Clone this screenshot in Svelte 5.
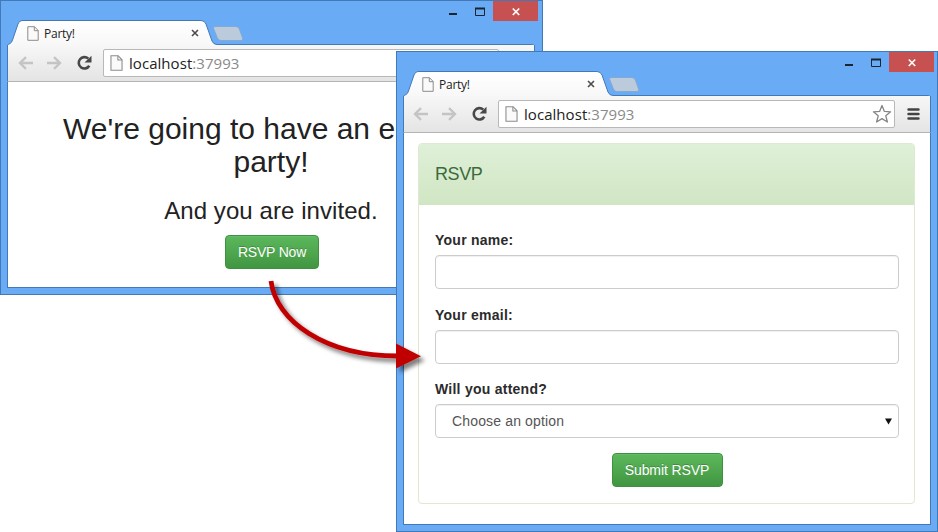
<script>
  const fields = ['Your name:', 'Your email:'];
</script>

{#snippet pageIcon(w, h)}
  <svg width={w} height={h} viewBox="0 0 12 15" fill="none" stroke="#8c8c8c">
    <path d="M.8.7H7.5L11.2 4.5V14.3H.8Z" fill="#fafafa" />
    <path d="M7.3.8V4.7H11.2" />
  </svg>
{/snippet}

{#snippet chrome()}
  <header class="strip">
    <svg class="shape" width="542" height="46" viewBox="0 0 542 46">
      <defs>
        <linearGradient id="tabfill" x1="0" y1="0" x2="0" y2="1">
          <stop offset="0" stop-color="#fff" />
          <stop offset="1" stop-color="#f7f7f7" />
        </linearGradient>
      </defs>
      <path d="M7.5 47V46Q8 44 10 43.5Q11.5 43 12.5 40L18 24Q19.3 20.5 22 20.5H201Q204.5 20.5 206 24L212 41Q213.5 44.5 217 44.5H532Q534.5 44.5 534.5 47Z" fill="url(#tabfill)" stroke="#4479b7" />
      <path d="M215 26.5H236Q238.5 26.5 239.4 29L242.7 38.5Q243.3 40.5 241 40.5H221Q218.3 40.5 217.4 38L213.6 28.5Q213 26.5 215 26.5Z" fill="#bccbdc" stroke="#83a9d4" />
      <path d="M449 14H457" stroke="#1c2430" stroke-width="2" />
      <path d="M475.5 8.5H484.5V15.5H475.5Z" fill="none" stroke="#1c2430" />
      <path d="M475 8.5H485" stroke="#1c2430" stroke-width="2" />
      <path d="M493 1H538V21H493Z" fill="#c75050" />
      <path d="M512.8 8.5L519.2 15M519.2 8.5L512.8 15" stroke="#fff" stroke-width="1.7" />
    </svg>
    <div class="tab">
      {@render pageIcon(12, 15)}
      <span class="title">Party!</span>
      <svg class="x" width="8" height="8" viewBox="0 0 8 8"><path d="M1 1L7 7M7 1L1 7" stroke="#4c4c4c" stroke-width="1.6" /></svg>
    </div>
  </header>
  <nav class="toolbar">
    <svg class="nav" width="80" height="20" viewBox="0 0 80 20" fill="none">
      <path d="M16 10H3M9 4.2L3 10L9 15.8" stroke="#c4c4c4" stroke-width="2.3" />
      <path d="M30 10H43M37 4.2L43 10L37 15.8" stroke="#c4c4c4" stroke-width="2.3" />
      <path d="M71.3 5.6A5.7 5.7 0 1 0 72.3 12.8" stroke="#484848" stroke-width="2.6" />
      <path d="M74.5 2.8V9.4H67.5Z" fill="#484848" />
    </svg>
    <div class="omnibox">
      {@render pageIcon(13, 16)}
      <span class="url">localhost<i>:37993</i></span>
      <svg class="star" width="20" height="20" viewBox="0 0 20 20">
        <path d="M10 1.5L12.4 7.4L18.6 7.8L13.8 11.8L15.4 18L10 14.6L4.6 18L6.2 11.8L1.4 7.8L7.6 7.4Z" fill="#fff" stroke="#858585" stroke-width="1.3" stroke-linejoin="round" />
      </svg>
    </div>
    <svg class="menu" width="14" height="14" viewBox="0 0 14 14">
      <path d="M1.7 2.2H12.3M1.7 7H12.3M1.7 11.8H12.3" stroke="#434343" stroke-width="2.8" stroke-linecap="round" />
    </svg>
  </nav>
{/snippet}

<main class="stage">
  <section class="window back">
    {@render chrome()}
    <div class="page invite">
      <h1>We're going to have an e<br /><span>party!</span></h1>
      <h2>And you are invited.</h2>
      <button class="now">RSVP Now</button>
    </div>
  </section>

  <section class="window front">
    {@render chrome()}
    <div class="page">
      <form class="panel" onsubmit={(e) => e.preventDefault()}>
        <h3>RSVP</h3>
        <div class="body">
          {#each fields as label}
            <label>{label}<input type="text" /></label>
          {/each}
          <label for="attend">Will you attend?</label>
          <div class="select" id="attend">
            <span>Choose an option</span>
            <svg width="7" height="7" viewBox="0 0 7 7"><path d="M0 .5H7L3.5 6.5Z" fill="#111" /></svg>
          </div>
          <button class="submit">Submit RSVP</button>
        </div>
      </form>
    </div>
  </section>

  <svg class="arrow" width="180" height="110" viewBox="0 0 180 110">
    <defs>
      <filter id="shade" x="-10%" y="-10%" width="125%" height="125%">
        <feDropShadow dx="4" dy="4" stdDeviation="2" flood-color="#000" flood-opacity=".5" />
      </filter>
    </defs>
    <g filter="url(#shade)">
      <path d="M11 11C16 51 65 86 138 86" fill="none" stroke="#c00000" stroke-width="4.8" />
      <path d="M136 73.5L161 86.3L136 98.5Z" fill="#c00000" />
    </g>
  </svg>
</main>

<style>
  :global(body) { background: #fff; }
  .stage {
    position: relative;
    width: 938px;
    height: 532px;
    overflow: hidden;
    font-family: "Liberation Sans", Arial, sans-serif;
  }
  .window {
    position: absolute;
    box-sizing: border-box;
    display: flex;
    flex-direction: column;
    background: #6aabf5;
    border: 1px solid #4479b7;
    padding: 0 7px 6px 6px;
  }
  .back { left: 0; top: 0; width: 543px; height: 295px; }
  .front { left: 396px; top: 51px; width: 542px; height: 481px; padding-right: 6px; padding-bottom: 6px; }
  .strip { height: 44px; flex: none; position: relative; }
  .shape { position: absolute; left: -7px; top: -1px; }
  .tab {
    position: relative;
    display: flex;
    align-items: center;
    box-sizing: border-box;
    height: 26px;
    width: 180px;
    margin-left: 20px;
    top: 19px;
  }
  .front .tab { margin-left: 19px; width: 181px; }
  .title {
    font: 12px "Open Sans", "Noto Sans", sans-serif;
    color: #222;
    margin-left: 5px;
    letter-spacing: -.25px;
    flex: 1;
  }
  .x { margin-right: 8px; }
  .toolbar {
    height: 37px;
    flex: none;
    box-sizing: border-box;
    display: flex;
    align-items: center;
    padding: 0 10px 0 9px;
    background: linear-gradient(#f7f7f7, #e4e4e4);
    border-left: 1px solid #4479b7;
    border-right: 1px solid #4479b7;
    border-bottom: 1px solid #b4b4b4;
    position: relative;
  }
  .front .toolbar { padding-left: 8px; }
  .nav { flex: none; margin-right: 6px; }
  .omnibox {
    width: 396px;
    height: 28px;
    flex: none;
    box-sizing: border-box;
    border: 1px solid #b8b8b8;
    border-radius: 2px;
    background: #fff;
    display: flex;
    align-items: center;
    padding: 0 3px 0 6px;
  }
  .url {
    flex: 1;
    margin-left: 6px;
    font: 15px "Open Sans", "Noto Sans", sans-serif;
    color: #222;
    letter-spacing: .05px;
  }
  .front .omnibox { padding-right: 2px; width: 397px; }
  .url i { font-style: normal; color: #8a8a8a; }
  .menu { margin-left: 12px; }
  .page {
    flex: 1;
    min-height: 0;
    background: #fff;
    border: 1px solid #4479b7;
    border-top: 0;
    box-sizing: border-box;
  }
  .invite { display: flex; flex-direction: column; align-items: center; padding-top: 30px; }
  h1, h2, h3 { margin: 0; font-weight: 400; color: #222; }
  h1 { width: 416px; font-size: 30px; line-height: 33px; white-space: nowrap; }
  h1 span { display: block; text-align: center; }
  h2 { font-size: 24px; line-height: 26px; margin: 20px 0 11px; letter-spacing: .07px; }
  button {
    height: 34px;
    padding: 0;
    border: 1px solid #3e9140;
    border-radius: 4px;
    background: linear-gradient(#5cb85c, #419641);
    box-shadow: inset 0 1px 0 #7bc57b55;
    color: #fff;
    font: 14px "Liberation Sans", Arial, sans-serif;
    text-shadow: 0 -1px 0 #0003;
    white-space: nowrap;
    letter-spacing: -.1px;
  }
  .now { width: 94px; margin-left: 2px; letter-spacing: -.2px; }
  .panel {
    box-sizing: border-box;
    width: 497px;
    height: 361px;
    margin: 10px 0 0 14px;
    border: 1px solid #dfe8d0;
    border-radius: 4px;
    overflow: hidden;
  }
  h3 {
    height: 61px;
    padding-left: 16px;
    font-size: 18px;
    line-height: 61px;
    letter-spacing: -.4px;
    color: #3c6a3d;
    background: linear-gradient(#dff0d8, #d0e6c3);
  }
  .body { display: flex; flex-direction: column; padding: 25px 15px 0 16px; }
  label { font-size: 14px; line-height: 20px; font-weight: 700; color: #2b2b2b; letter-spacing: .25px; }
  input, .select {
    display: block;
    box-sizing: border-box;
    width: 464px;
    height: 34px;
    border: 1px solid #ccc;
    border-radius: 4px;
    background: #fff;
    box-shadow: inset 0 1px 1px #00000010;
  }
  input { margin: 5px 0 15.5px; }
  .select {
    display: flex;
    align-items: center;
    justify-content: space-between;
    margin-top: 5px;
    padding: 0 6px 0 16px;
    font-size: 14px;
    letter-spacing: .15px;
    color: #555;
  }
  .submit { align-self: center; width: 111px; margin-top: 15px; }
  .arrow { position: absolute; left: 260px; top: 270px; }
</style>
